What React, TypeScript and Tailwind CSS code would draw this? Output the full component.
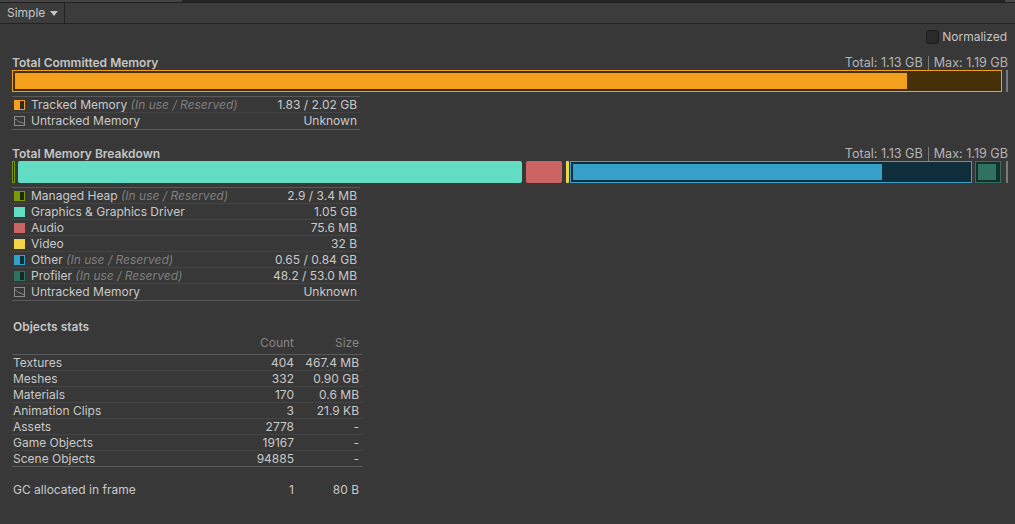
import React from "react";

const Half = ({ color, dark }: { color: string; dark: string }) => (
  <span
    className="inline-flex w-[11px] h-[10px] border"
    style={{ borderColor: color, background: dark }}
  >
    <span className="w-[5px] h-full" style={{ background: color }} />
  </span>
);

const Solid = ({ color }: { color: string }) => (
  <span className="inline-block w-[11px] h-[10px]" style={{ background: color }} />
);

const Untracked = () => (
  <svg width="11" height="10" viewBox="0 0 11 10" className="block">
    <rect x="0.5" y="0.5" width="10" height="9" fill="none" stroke="#8c8c8c" />
    <path d="M1 3 C3 3 3.5 6 6 6 C8 6 8.5 7.5 10 7.5" fill="none" stroke="#8c8c8c" strokeWidth="1" />
  </svg>
);

type Row = { icon: React.ReactNode; label: string; note?: string; value: string };

const MemList = ({ rows }: { rows: Row[] }) => (
  <div className="w-[348px] border-t border-[#5a5a5a]">
    {rows.map((r, i) => (
      <div
        key={i}
        className={`flex items-center h-[16px] pl-[2px] pr-[3px] border-b ${
          i === rows.length - 1 ? "border-[#5a5a5a] h-[17px]" : "border-[#444444]"
        }`}
      >
        <span className="w-[17px] flex items-center">{r.icon}</span>
        <span className="flex-1 whitespace-nowrap text-[#c8c8c8]">
          {r.label}
          {r.note && <span className="italic text-[#7f7f7f]"> {r.note}</span>}
        </span>
        <span className="text-[#c8c8c8]">{r.value}</span>
      </div>
    ))}
  </div>
);

const Header = ({ title }: { title: string }) => (
  <div className="flex items-center h-[15px]">
    <span className="flex-1 font-semibold text-[#c4c4c4]">{title}</span>
    <span className="flex items-center text-[12.6px] text-[#b4b4b4]">
      <span>Total: 1.13 GB</span>
      <span className="mx-[5px] w-px h-[14px] bg-[#7a7a7a]" />
      <span>Max: 1.19 GB</span>
    </span>
  </div>
);

const objects = [
  ["Textures", "404", "467.4 MB"],
  ["Meshes", "332", "0.90 GB"],
  ["Materials", "170", "0.6 MB"],
  ["Animation Clips", "3", "21.9 KB"],
  ["Assets", "2778", "-"],
  ["Game Objects", "19167", "-"],
  ["Scene Objects", "94885", "-"],
];

export default function App() {
  return (
    <div
      className="w-[1015px] h-[524px] bg-[#383838] overflow-hidden text-[12px] leading-[16px] text-[#c4c4c4]"
      style={{ fontFamily: "Inter, 'Noto Sans', sans-serif" }}
    >
      {/* top strip */}
      <div className="flex h-[2px] bg-[#262626]">
        <div className="w-[182px] bg-[#454545]" />
        <div className="flex-1" />
        <div className="w-[10px] bg-[#4a4a4a]" />
      </div>
      <div className="h-px bg-[#202020]" />
      {/* toolbar */}
      <div className="flex h-[21px] bg-[#3c3c3c] border-b border-[#232323]">
        <div className="flex items-center gap-[5px] w-[65px] pl-[7px] border-r border-[#232323] text-[#c4c4c4]">
          <span>Simple</span>
          <svg width="8" height="5" viewBox="0 0 8 5">
            <path d="M0 0 H8 L4 5 Z" fill="#c4c4c4" />
          </svg>
        </div>
      </div>

      <div className="pl-[12px] pr-[7px]">
        {/* normalized */}
        <div className="flex justify-end items-center mt-[6px] h-[14px] gap-[3px] pr-px">
          <span className="w-[13px] h-[14px] rounded-[3px] bg-[#2a2a2a] border border-[#1c1c1c]" />
          <span className="text-[#c4c4c4]">Normalized</span>
        </div>

        {/* committed */}
        <div className="mt-[11px]">
          <Header title="Total Committed Memory" />
        </div>
        <div className="flex h-[22px]">
          <div className="flex-1 border border-[#f4a01c] bg-[#45300a] p-[2px]">
            <div className="h-full w-[90.7%] bg-[#f5a01d]" />
          </div>
          <div className="ml-[4px] w-[2px] bg-[#7a7a7a]" />
        </div>
        <div className="mt-[4px]">
          <MemList
            rows={[
              {
                icon: <Half color="#f4a01c" dark="#2a2a2a" />,
                label: "Tracked Memory",
                note: "(In use / Reserved)",
                value: "1.83 / 2.02 GB",
              },
              { icon: <Untracked />, label: "Untracked Memory", value: "Unknown" },
            ]}
          />
        </div>

        {/* breakdown */}
        <div className="mt-[16px]">
          <Header title="Total Memory Breakdown" />
        </div>
        <div className="flex h-[22px]">
          <div className="w-[3px] border border-[#7c9a05] bg-[#1f2a02]" />
          <div className="ml-[3px] w-[504px] rounded-[2px] bg-[#63dcc4]" />
          <div className="ml-[4px] w-[36px] rounded-[2px] bg-[#cd6464]" />
          <div className="ml-[4px] w-[3px] rounded-[1px] bg-[#f3d34a]" />
          <div className="ml-px w-[402px] border border-[#3aa0cc] bg-[#0f2e3b] p-[2px]">
            <div className="h-full w-[78%] bg-[#35a1c9]" />
          </div>
          <div className="ml-[3px] w-[26px] border border-[#2f7262] bg-[#143029] p-[2px]">
            <div className="h-full w-[91%] bg-[#2f7262]" />
          </div>
          <div className="ml-[5px] w-[2px] bg-[#7a7a7a]" />
        </div>
        <div className="mt-[4px]">
          <MemList
            rows={[
              { icon: <Half color="#7c9a05" dark="#1e2a05" />, label: "Managed Heap", note: "(In use / Reserved)", value: "2.9 / 3.4 MB" },
              { icon: <Solid color="#63dcc4" />, label: "Graphics & Graphics Driver", value: "1.05 GB" },
              { icon: <Solid color="#cd6464" />, label: "Audio", value: "75.6 MB" },
              { icon: <Solid color="#f3d34a" />, label: "Video", value: "32 B" },
              { icon: <Half color="#35a1c9" dark="#0f2e3b" />, label: "Other", note: "(In use / Reserved)", value: "0.65 / 0.84 GB" },
              { icon: <Half color="#2f7262" dark="#122a24" />, label: "Profiler", note: "(In use / Reserved)", value: "48.2 / 53.0 MB" },
              { icon: <Untracked />, label: "Untracked Memory", value: "Unknown" },
            ]}
          />
        </div>

        {/* objects stats */}
        <div className="w-[350px] mt-[18px]">
          <div className="h-[16px] pl-px font-semibold text-[#c4c4c4]">Objects stats</div>
          <div className="flex h-[16px] pr-[3px] text-[#848484]">
            <span className="flex-1" />
            <span className="w-[60px] text-right">Count</span>
            <span className="w-[65px] text-right">Size</span>
          </div>
          <div className="mt-[3px] border-t border-[#5a5a5a]">
            {objects.map((o, i) => (
              <div
                key={i}
                className={`flex h-[16px] pl-px pr-[3px] border-b ${
                  i === objects.length - 1 ? "border-[#5e5e5e]" : "border-[#444444]"
                }`}
              >
                <span className="flex-1 text-[#c8c8c8]">{o[0]}</span>
                <span className="w-[60px] text-right text-[#c8c8c8]">{o[1]}</span>
                <span className="w-[65px] text-right text-[#c8c8c8]">{o[2]}</span>
              </div>
            ))}
          </div>
          <div className="flex h-[16px] mt-[15px] pl-px pr-[3px]">
            <span className="flex-1 text-[#c8c8c8]">GC allocated in frame</span>
            <span className="w-[60px] text-right text-[#c8c8c8]">1</span>
            <span className="w-[65px] text-right text-[#c8c8c8]">80 B</span>
          </div>
        </div>
      </div>
    </div>
  );
}
